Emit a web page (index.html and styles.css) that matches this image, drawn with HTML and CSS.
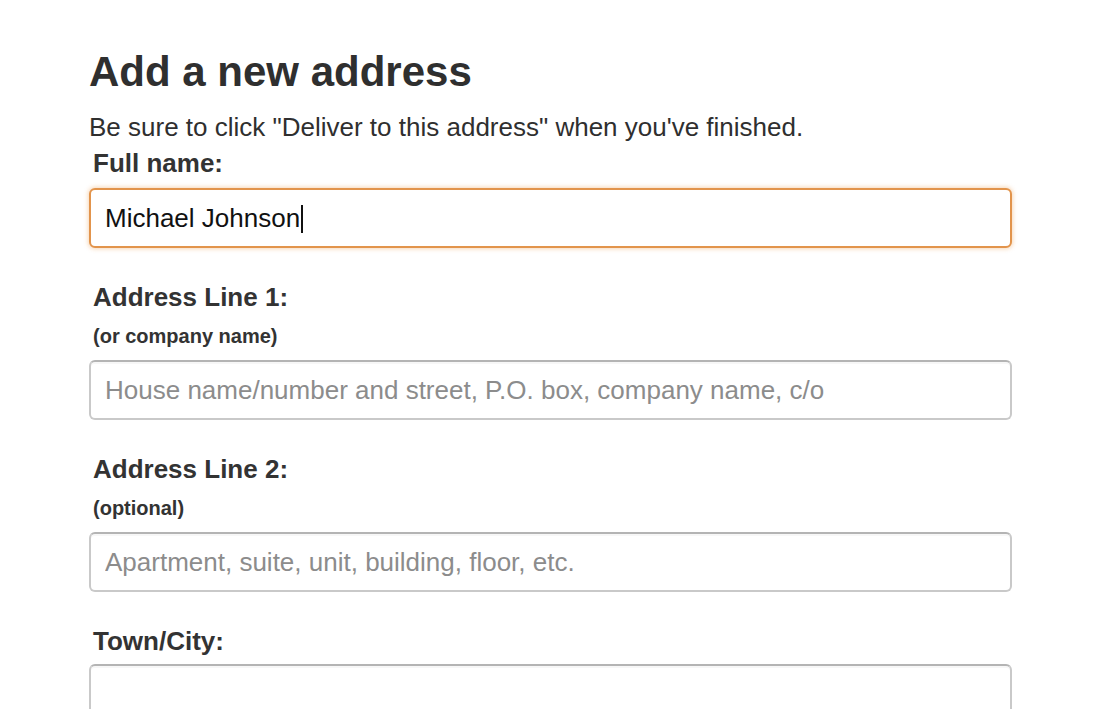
FILE: index.html
```html
<!DOCTYPE html>
<html lang="en">
<head>
<meta charset="utf-8">
<title>Add a new address</title>
<link rel="stylesheet" href="styles.css">
</head>
<body>
<main class="page">
  <h1 class="title">Add a new address</h1>
  <p class="intro">Be sure to click "Deliver to this address" when you've finished.</p>

  <div class="field">
    <label class="label" for="fullname">Full name:</label>
    <div class="input input-focus" id="fullname" role="textbox">Michael Johnson<span class="caret"></span></div>
  </div>

  <div class="field">
    <label class="label" for="line1">Address Line 1:</label>
    <div class="sublabel">(or company name)</div>
    <input class="input" id="line1" type="text" placeholder="House name/number and street, P.O. box, company name, c/o">
  </div>

  <div class="field">
    <label class="label" for="line2">Address Line 2:</label>
    <div class="sublabel">(optional)</div>
    <input class="input" id="line2" type="text" placeholder="Apartment, suite, unit, building, floor, etc.">
  </div>

  <div class="field">
    <label class="label label-tight" for="city">Town/City:</label>
    <input class="input" id="city" type="text">
  </div>
</main>
</body>
</html>
```

FILE: styles.css
```css
* {
  box-sizing: border-box;
}

html, body {
  margin: 0;
  padding: 0;
  background: #ffffff;
  overflow: hidden;
}

body {
  font-family: "Liberation Sans", Arial, Helvetica, sans-serif;
  color: #333333;
}

.page {
  width: 923px;
  margin-left: 89px;
  padding-top: 47px;
}

.title {
  margin: 0;
  font-size: 42px;
  line-height: 50px;
  font-weight: 700;
  color: #2f2f2f;
}

.intro {
  margin: 14px 0 0 0;
  font-size: 26px;
  line-height: 32px;
  color: #2f2f2f;
}

.field {
  margin-top: 34px;
}

.field:first-of-type {
  margin-top: 5px;
}

.label {
  display: block;
  padding-left: 4px;
  font-size: 26px;
  line-height: 30px;
  font-weight: 700;
  color: #333333;
}

.sublabel {
  margin-top: 12px;
  padding-left: 4px;
  font-size: 20px;
  line-height: 24px;
  font-weight: 700;
  color: #333333;
}

.sublabel + .input {
  margin-top: 12px;
}

.input {
  display: block;
  width: 100%;
  height: 60px;
  margin-top: 10px;
  padding: 0 14px;
  border: 2px solid #c9c9c9;
  border-top-color: #b4b4b4;
  border-radius: 6px;
  background: #ffffff;
  box-shadow: inset 0 2px 0 rgba(0, 0, 0, 0.03);
  font-family: "Liberation Sans", Arial, Helvetica, sans-serif;
  font-size: 26px;
  line-height: 56px;
  color: #111111;
  outline: none;
}

.input::placeholder {
  color: #8c8c8c;
  opacity: 1;
}

.input-focus {
  border-color: #e2944c;
  box-shadow: 0 0 4px 1px rgba(232, 140, 50, 0.35);
}

.caret {
  display: inline-block;
  width: 2px;
  height: 28px;
  margin-left: 1px;
  vertical-align: -6px;
  background: #111111;
}

.label-tight + .input {
  margin-top: 8px;
}
```
